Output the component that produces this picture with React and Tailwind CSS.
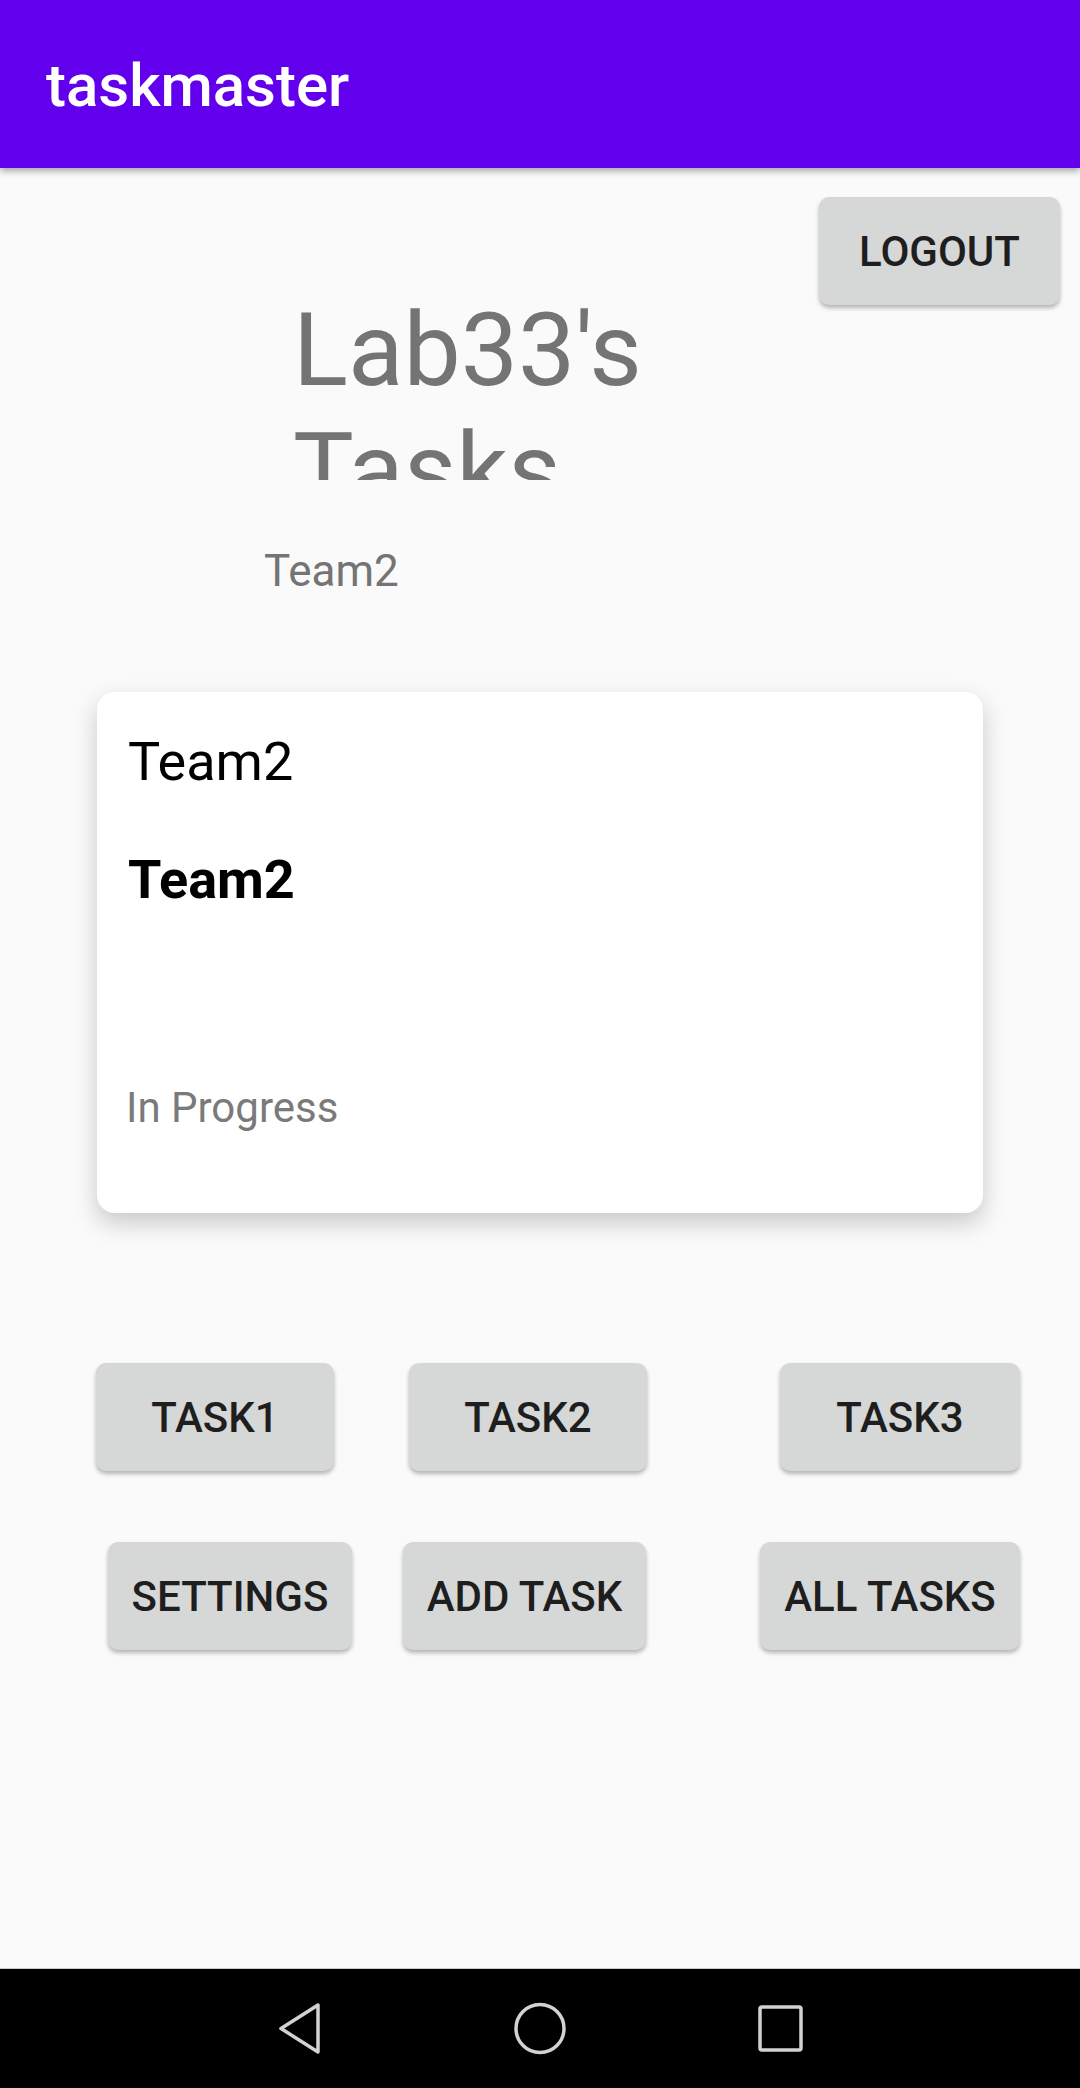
import React from "react";

function Btn({ children, className }) {
  return (
    <div
      className={
        "h-[108px] flex items-center justify-center pt-[2px] bg-[#d6d7d7] rounded-[10px] shadow-[0_3px_4px_rgba(0,0,0,0.28)] text-[42px] leading-[42px] font-medium text-[#1e1e1e] uppercase shrink-0 " +
        className
      }
    >
      {children}
    </div>
  );
}

export default function App() {
  return (
    <div className="w-[1080px] h-[2088px] flex flex-col bg-[#fafafa] overflow-hidden font-['Roboto',sans-serif]">
      <div className="relative z-10 h-[168px] shrink-0 bg-[#6200ee] shadow-[0_3px_7px_rgba(0,0,0,0.35)] pl-[46px] pt-[56px]">
        <div className="text-[60px] leading-[60px] font-medium text-white">taskmaster</div>
      </div>

      <div className="flex-1 flex flex-col">
        <div className="flex items-start">
          <div className="ml-[293px] mt-[122px] w-[380px] h-[190px] overflow-hidden text-[102px] leading-[120px] text-[#747474]">
            Lab33's Tasks
          </div>
          <Btn className="ml-auto mr-[20px] mt-[29px] w-[241px]">Logout</Btn>
        </div>

        <div className="ml-[264px] mt-[69px] text-[44px] leading-[44px] text-[#747474]">Team2</div>

        <div className="ml-[97px] mt-[99px] w-[886px] h-[521px] bg-white rounded-[18px] shadow-[0_10px_24px_rgba(0,0,0,0.2)] pl-[31px] pt-[43px] flex flex-col">
          <div className="text-[54px] leading-[54px] text-black">Team2</div>
          <div className="mt-[64px] text-[54px] leading-[54px] font-bold text-black">Team2</div>
          <div className="mt-[180px] -ml-[2px] text-[42px] leading-[42px] text-[#7a7a7a]">In Progress</div>
        </div>

        <div className="flex mt-[150px]">
          <Btn className="ml-[96px] w-[238px]">Task1</Btn>
          <Btn className="ml-[75px] w-[238px]">Task2</Btn>
          <Btn className="ml-[133px] w-[240px]">Task3</Btn>
        </div>
        <div className="flex mt-[71px]">
          <Btn className="ml-[108px] w-[244px]">Settings</Btn>
          <Btn className="ml-[51px] w-[243px]">Add Task</Btn>
          <Btn className="ml-[114px] w-[260px]">All Tasks</Btn>
        </div>
      </div>

      <div className="h-[120px] shrink-0 bg-black border-t border-[#c8c8c8] relative">
        <svg width="1080" height="120" viewBox="0 1968 1080 120" className="block">
          <path
            d="M318 2004 L318 2051 L281 2027.5 Z"
            fill="none"
            stroke="#d2d2d2"
            strokeWidth="3.5"
            strokeLinejoin="round"
          />
          <circle cx="540" cy="2027.5" r="24" fill="none" stroke="#d2d2d2" strokeWidth="3.5" />
          <rect x="760" y="2006" width="41" height="43" rx="2" fill="none" stroke="#d2d2d2" strokeWidth="3.5" />
        </svg>
      </div>
    </div>
  );
}
